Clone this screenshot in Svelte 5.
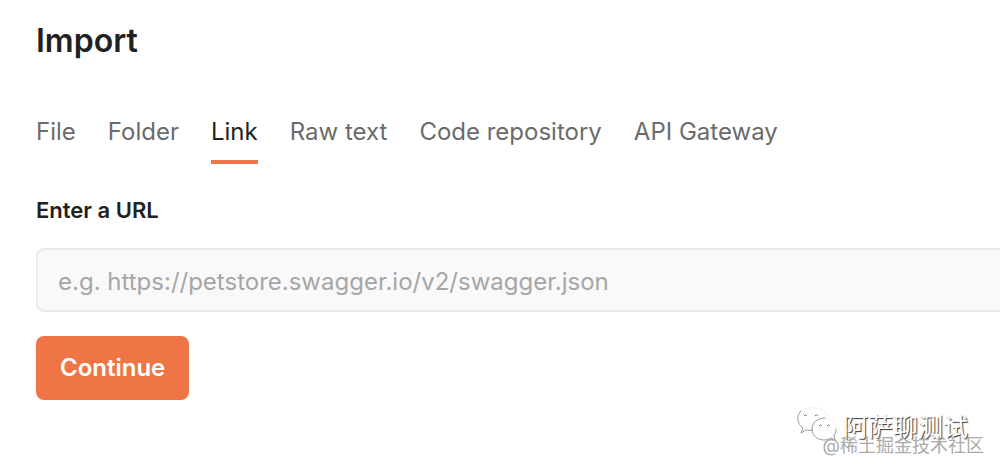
<script lang="ts">
  const tabs = ['File', 'Folder', 'Link', 'Raw text', 'Code repository', 'API Gateway'];

  let active = 'Link';
  let url = '';
</script>

<main class="import">
  <h1>Import</h1>

  <div class="tabs" role="tablist">
    {#each tabs as tab}
      <button
        type="button"
        class="tab"
        class:active={tab === active}
        role="tab"
        aria-selected={tab === active}
        on:click={() => (active = tab)}
      >
        {tab}
      </button>
    {/each}
  </div>

  <form on:submit|preventDefault>
    <label for="url">Enter a URL</label>
    <input
      id="url"
      type="text"
      placeholder="e.g. https://petstore.swagger.io/v2/swagger.json"
      bind:value={url}
    />
    <button type="submit" class="continue">Continue</button>
  </form>

  <div class="watermark">
    <div class="account">
      <svg viewBox="0 0 42 34" class="wechat" aria-hidden="true">
        <path class="faint" d="M4 3C8-1 22-2 28 4c2 2 3 4 3 6" />
        <path d="M4 3C-1 8 0 16 6 20l-2 5 5-3c2 0 4 1 7 0" />
        <path class="faint" d="M28 10c6 1 11 5 11 11" />
        <path d="M28 10c-8 0-13 5-13 11 0 7 6 11 12 11 3 0 5-1 7-2l4 2-1-5c2-2 2-4 2-6" />
        <path class="eye" d="M7 8q1.5-2.5 3 0M18 8q1.5-2.5 3 0M22 18q1.5-2.5 3 0M30 18q1.5-2.5 3 0" />
      </svg>
      <span>阿萨聊测试</span>
    </div>
    <div class="community">@稀土掘金技术社区</div>
  </div>
</main>

<style>
  :global(body) {
    margin: 0;
    background: #fff;
    overflow-x: hidden;
  }

  .import {
    padding: 20px 0 0 36px;
    font-family: Inter, 'Noto Sans CJK SC', sans-serif;
    color: #212121;
  }

  h1 {
    margin: 0;
    font-size: 32px;
    line-height: 42px;
    font-weight: 600;
  }

  .tabs {
    display: flex;
    gap: 32px;
    margin-top: 50px;
  }

  .tab {
    padding: 4px 0 12px;
    border: 0;
    border-bottom: 4px solid transparent;
    background: none;
    font: inherit;
    font-size: 24px;
    line-height: 32px;
    color: #6b6b6b;
    white-space: nowrap;
    cursor: pointer;
  }

  .tab.active {
    border-color: #ef7547;
    color: #212121;
  }

  form {
    display: flex;
    flex-direction: column;
    align-items: flex-start;
    margin-top: 32px;
  }

  label {
    font-size: 22px;
    line-height: 28px;
    font-weight: 600;
  }

  input {
    box-sizing: border-box;
    width: 100%;
    height: 64px;
    margin: 24px 0;
    padding: 2px 20px 0;
    border: 2px solid #ebebeb;
    border-right: 0;
    border-radius: 8px 0 0 8px;
    background: #f9f9f9;
    font: inherit;
    font-size: 24px;
    color: #212121;
  }

  input::placeholder {
    color: #a6a6a6;
    opacity: 1;
  }

  .continue {
    height: 64px;
    padding: 0 24px 2px;
    border: 0;
    border-radius: 8px;
    background: #ef7547;
    font: inherit;
    font-size: 24px;
    font-weight: 600;
    color: #fff;
    cursor: pointer;
  }

  .watermark {
    position: absolute;
    right: 16px;
    bottom: 16px;
    text-align: right;
  }

  .account {
    display: flex;
    align-items: center;
    justify-content: flex-end;
    gap: 4px;
    height: 22px;
    padding-right: 16px;
    font-size: 25px;
    color: #fff;
    text-shadow: 1px 1px 1px #333;
  }

  .wechat {
    width: 42px;
    height: 34px;
    fill: none;
    stroke: #999;
    overflow: visible;
  }

  .faint {
    stroke: #e6e6e6;
    stroke-dasharray: 2 2;
  }

  .eye {
    stroke: #777;
  }

  .community {
    font-size: 18px;
    line-height: 20px;
    color: #aaa;
  }
</style>
